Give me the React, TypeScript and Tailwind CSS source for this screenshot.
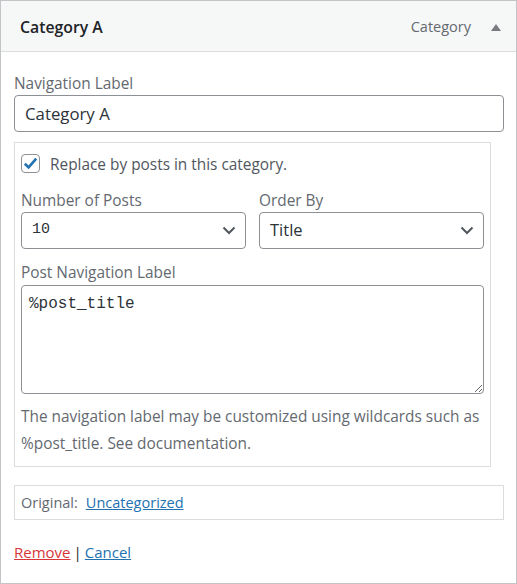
import React from "react";

const font = { fontFamily: '"Open Sans", "Noto Sans", sans-serif' };

function Chevron() {
  return (
    <svg width="14" height="9" viewBox="0 0 14 9" className="shrink-0">
      <path d="M1.5 1.5 L7 7 L12.5 1.5" fill="none" stroke="#50575e" strokeWidth="2" />
    </svg>
  );
}

function SelectBox({ value, mono }: { value: string; mono?: boolean }) {
  return (
    <div className="flex h-[37px] w-[225px] items-center justify-between rounded-[4px] border border-[#8c8f94] bg-white pl-[10px] pr-[9px]">
      <span
        className={mono ? "text-[15px] text-[#2c3338]" : "text-[16.5px] text-[#2c3338]"}
        style={mono ? { fontFamily: '"Liberation Mono", "DejaVu Sans Mono", monospace' } : undefined}
      >
        {value}
      </span>
      <Chevron />
    </div>
  );
}

export default function App() {
  return (
    <div className="h-[584px] w-[517px] bg-white" style={font}>
      <div className="flex h-[584px] w-[517px] flex-col border border-[#c3c4c7]">
        <div className="flex h-[51px] shrink-0 items-center justify-between border-b border-[#dcdcde] bg-[#f6f7f7] pl-[19px] pr-[15px]">
          <span className="pt-[4px] text-[15.8px] font-semibold text-[#1d2327]">Category A</span>
          <div className="flex items-center gap-[20px] pt-[2px]">
            <span className="text-[14.5px] text-[#646970]">Category</span>
            <svg width="10" height="7" viewBox="0 0 10 7">
              <path d="M5 0 L10 7 L0 7 Z" fill="#787c82" />
            </svg>
          </div>
        </div>
        <div className="flex flex-col pl-[13px] pt-[22px]">
          <div className="h-[21px] text-[15.4px] leading-[20px] text-[#646970]">Navigation Label</div>
          <div className="flex h-[37px] w-[490px] items-center rounded-[4px] border border-[#8c8f94] bg-white pl-[10px] text-[16.8px] text-[#2c3338]">
            Category A
          </div>
          <div className="mt-[10px] flex h-[325px] w-[477px] flex-col border border-[#dcdcde] px-[6px] pt-[11px]">
            <div className="flex h-[19px] items-center gap-[10px]">
              <div className="flex h-[19px] w-[19px] items-center justify-center rounded-[4px] border border-[#8c8f94] bg-white">
                <svg width="15" height="13" viewBox="0 0 15 13">
                  <path d="M1.8 6.8 L5.6 10.4 L13.2 1.6" fill="none" stroke="#2271b1" strokeWidth="2.6" />
                </svg>
              </div>
              <span className="pt-[2px] text-[15.4px] leading-[20px] text-[#50575e]">Replace by posts in this category.</span>
            </div>
            <div className="mt-[18px] flex gap-[13px]">
              <div className="flex flex-col">
                <div className="h-[21px] text-[15.4px] leading-[20px] text-[#646970]">Number of Posts</div>
                <SelectBox value="10" mono />
              </div>
              <div className="flex flex-col">
                <div className="h-[21px] text-[15.4px] leading-[20px] text-[#646970]">Order By</div>
                <SelectBox value="Title" />
              </div>
            </div>
            <div className="mt-[14px] h-[22px] text-[15.4px] leading-[20px] text-[#646970]">Post Navigation Label</div>
            <textarea
              defaultValue="%post_title"
              className="h-[109px] w-[463px] resize-y rounded-[4px] border border-[#8c8f94] bg-white px-[7px] pt-[6px] text-[16px] text-[#2c3338] outline-none"
              style={{ fontFamily: '"Liberation Mono", "DejaVu Sans Mono", monospace' }}
            />
            <div className="mt-[9px] text-[15.4px] leading-[27px] text-[#646970]">
              The navigation label may be customized using wildcards such as %post_title. See documentation.
            </div>
          </div>
          <div className="mt-[18px] flex h-[35px] w-[490px] items-center gap-[8px] border border-[#dcdcde] pl-[6px] text-[14.5px]">
            <span className="text-[#646970]">Original:</span>
            <span className="text-[#2271b1] underline">Uncategorized</span>
          </div>
          <div className="mt-[21px] flex items-center gap-[3px] text-[15px]">
            <span className="text-[#d63638] underline">Remove</span>
            <span className="text-[#1d2327]">|</span>
            <span className="text-[#2271b1] underline">Cancel</span>
          </div>
        </div>
      </div>
    </div>
  );
}
